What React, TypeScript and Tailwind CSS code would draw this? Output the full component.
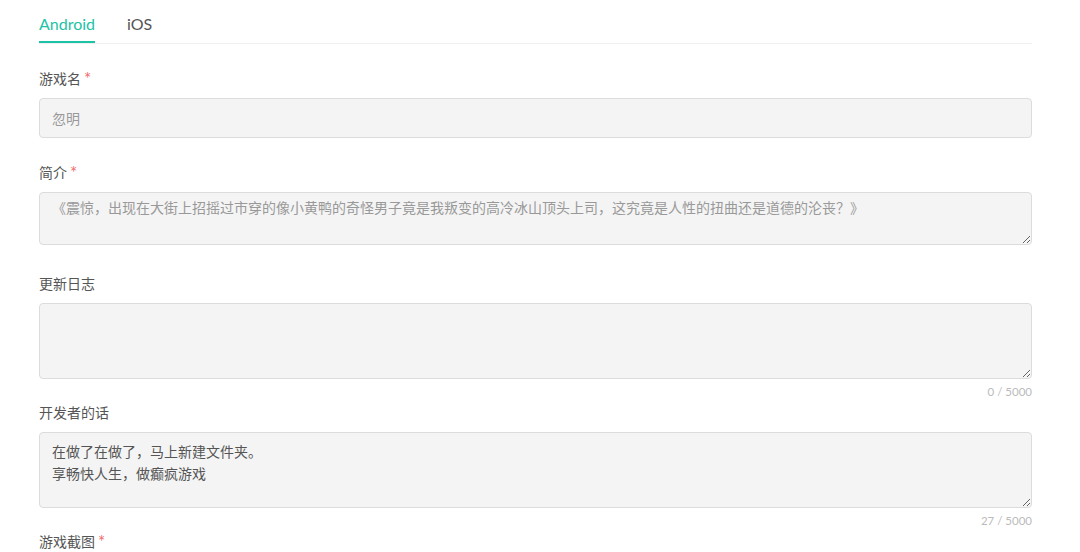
import React from 'react';

const font = { fontFamily: 'Lato, "Noto Sans CJK SC", sans-serif' };

const Label: React.FC<{ text: string; required?: boolean }> = ({ text, required }) => (
  <div className="h-5 leading-5 text-[14px] text-[#555] mb-[9px] flex items-center">
    {text}
    {required && <span className="text-[#f26d6d] ml-[3px] text-[17px] leading-5">*</span>}
  </div>
);

const Area: React.FC<{ value: string; h: string; muted?: boolean; pt?: string }> = ({ value, h, muted, pt = 'pt-[8px]' }) => (
  <textarea
    readOnly
    value={value}
    className={`block w-full ${h} rounded-[4px] border border-[#dcdcdc] bg-[#f4f4f4] px-3 ${pt} pb-[6px] text-[14px] leading-[22px] outline-none resize-y ${muted ? 'text-[#999]' : 'text-[#555]'}`}
    style={font}
  />
);

export default function App() {
  return (
    <div className="min-h-screen bg-white" style={font}>
      <div className="w-[993px] ml-[39px]">
        {/* Tabs */}
        <div className="flex gap-8 border-b border-[#f0f0f0] pt-[14px]">
          <div className="text-[16px] leading-5 text-[#1cc3a5] pb-[7px] border-b-2 border-[#1cc3a5]">Android</div>
          <div className="text-[16px] leading-5 text-[#555] pb-[7px]">iOS</div>
        </div>

        <div className="mt-[25px]">
          <Label text="游戏名" required />
          <div className="h-10 rounded-[4px] border border-[#dcdcdc] bg-[#f4f4f4] px-3 flex items-center text-[14px] text-[#999]">
            忽明
          </div>
        </div>

        <div className="mt-[25px]">
          <Label text="简介" required />
          <Area
            h="h-[53px]"
            muted
            pt="pt-[4px]"
            value="《震惊，出现在大街上招摇过市穿的像小黄鸭的奇怪男子竟是我叛变的高冷冰山顶头上司，这究竟是人性的扭曲还是道德的沦丧？》"
          />
        </div>

        <div className="mt-[29px]">
          <Label text="更新日志" />
          <Area h="h-[76px]" value="" />
          <div className="text-right text-[11.5px] leading-4 text-[#bbb] mt-[5px]">0 / 5000</div>
        </div>

        <div className="mt-[3px]">
          <Label text="开发者的话" />
          <Area h="h-[76px]" value={'在做了在做了，马上新建文件夹。\n享畅快人生，做癫疯游戏'} />
          <div className="text-right text-[11.5px] leading-4 text-[#bbb] mt-[5px]">27 / 5000</div>
        </div>

        <div className="mt-[3px]">
          <Label text="游戏截图" required />
        </div>
      </div>
    </div>
  );
}
